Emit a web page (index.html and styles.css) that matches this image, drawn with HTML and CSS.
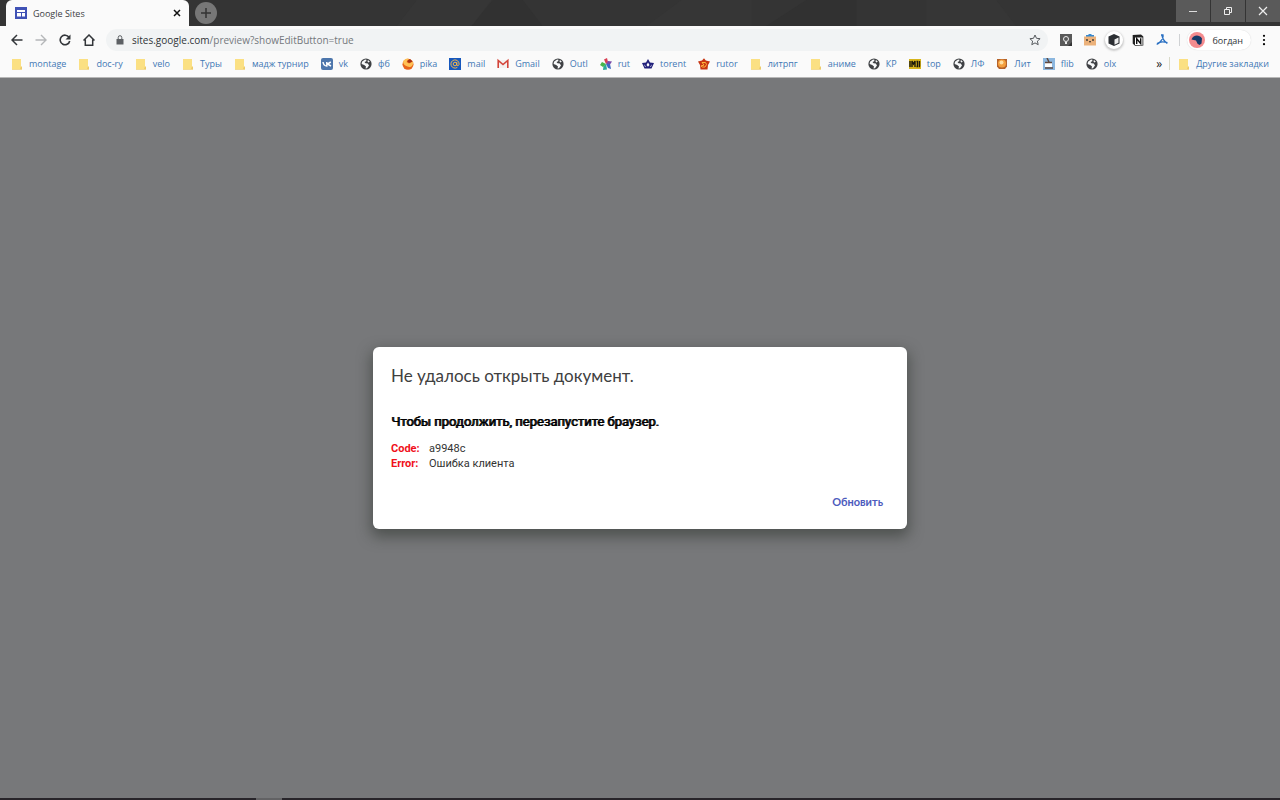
FILE: index.html
```html
<!DOCTYPE html>
<html lang="ru">
<head>
<meta charset="utf-8">
<title>Google Sites</title>
<link rel="stylesheet" href="styles.css">
</head>
<body>
<svg class="defs" aria-hidden="true">
  <symbol id="folder" viewBox="0 0 12 12"><path d="M1 1h9v8l1 1V11.500H1z" fill="#fbe083"/><path d="M10 8.500h1v3H1V11h8z" fill="#edcb6c"/></symbol>
  <symbol id="globe" viewBox="0 0 12 12"><circle cx="6" cy="6" r="5.600" fill="#3f4144"/><path d="M2 3.800 5 1.500l1.500.3-.3 1.500L4.500 4l1 1.300 2.300.2L9 7.400 7 10.200l-1.500.3.500-2-1.800-1.400L1.600 6zM8 2l1.800 1.700L8.400 4.500 7.400 3.300z" fill="#f8f9fa"/></symbol>
</svg>
<header class="browser">
  <div class="tabbar">
    <div class="tab">
      <svg class="tab-icon" viewBox="0 0 12 12"><path fill="#3f51b5" d="M0 0h12v12H0z"/><path fill="#fff" d="M2 3h8v2H2zM2 6h4v3.500H2zM7 6h3v3.500H7z"/></svg>
      <span class="tab-title">Google Sites</span>
      <button class="tab-close" aria-label="Закрыть"><svg width="8" height="8" viewBox="0 0 8 8"><path d="m1 1 6 6M7 1 1 7" stroke="#111" stroke-width="1.500"/></svg></button>
    </div>
    <button class="new-tab" aria-label="Новая вкладка"><svg width="12" height="12" viewBox="0 0 12 12"><path d="M6 1v10M1 6h10" stroke="#333" stroke-width="1.500"/></svg></button>
    <svg class="theme" viewBox="0 0 960 26" preserveAspectRatio="none"><path fill="#363636" d="M180 26 200 0h75L255 26zM430 26 465 0h70v26zM710 0h70l20 26h-90z"/><path fill="#313131" d="m255 26 21-26h30l20 26zM590 0h50v26h-90z"/></svg>
    <div class="window-buttons">
      <button aria-label="Свернуть"><svg width="10" height="10" viewBox="0 0 10 10"><path d="M1 5.500h8" stroke="#ddd"/></svg></button>
      <button aria-label="Восстановить"><svg width="10" height="10" viewBox="0 0 10 10"><path d="M1.500 3.500h5v5h-5zM3.500 3.500v-2h5v5h-2" fill="none" stroke="#eee"/></svg></button>
      <button aria-label="Закрыть окно"><svg width="10" height="10" viewBox="0 0 10 10"><path d="m1 1 8 8M9 1 1 9" stroke="#eee" stroke-width="1.200"/></svg></button>
    </div>
  </div>
  <div class="toolbar">
    <nav class="nav">
      <button aria-label="Назад"><svg viewBox="0 0 12 12"><path d="M11.500 6H1.200M6 1 1 6l5 5" fill="none" stroke="#33363a" stroke-width="1.500"/></svg></button>
      <button aria-label="Вперёд"><svg viewBox="0 0 12 12"><path d="M.5 6h10.300M6 1l5 5-5 5" fill="none" stroke="#b5b7b9" stroke-width="1.400"/></svg></button>
      <button aria-label="Обновить страницу"><svg viewBox="0 0 12 12"><path d="M10 3.300A4.800 4.800 0 1 0 10.700 7" fill="none" stroke="#33363a" stroke-width="1.600"/><path d="M11.500.5v5h-5z" fill="#33363a"/></svg></button>
      <button aria-label="Домой"><svg viewBox="0 0 12 12"><path d="M.5 6.500 6 1l5.500 5.500M2.300 5.500v5.700h7.400V5.500" fill="none" stroke="#33363a" stroke-width="1.500"/></svg></button>
    </nav>
    <div class="omnibox">
      <svg class="lock" viewBox="0 0 8 10"><path fill="#5c6064" d="M.5 4h7v5.500h-7z"/><path d="M2.200 4V2.500a1.800 1.800 0 0 1 3.600 0V4" fill="none" stroke="#5c6064"/></svg>
      <span class="url"><span class="host">sites.google.com</span>/preview?showEditButton=true</span>
      <button class="star" aria-label="Добавить в закладки"><svg viewBox="0 0 12 12"><path d="m6 1 1.500 3.300 3.600.4-2.700 2.400.8 3.600L6 8.900l-3.200 1.800.8-3.600L.9 4.700l3.600-.4z" fill="none" stroke="#55595d"/></svg></button>
    </div>
    <div class="extensions">
      <button aria-label="Keep"><svg viewBox="0 0 12 12"><path fill="#595959" d="M0 0h12v12H0z"/><circle cx="6" cy="5" r="2.500" fill="none" stroke="#eee"/><path d="M5 8h2v2H5z" fill="#eee"/><path d="M12 8v4H8z" fill="#333"/></svg></button>
      <button aria-label="Коробка"><svg viewBox="0 0 12 12"><path fill="#3789cf" d="M2 1h2l1-1h2l1 1h2v2H2z"/><path fill="#ecb27b" d="M0 2.500h12v9H0z"/><circle cx="3" cy="6" r=".9" fill="#333"/><circle cx="9" cy="6" r=".9" fill="#333"/><path d="M5 7.500 6 8l1-.5" fill="none" stroke="#222"/></svg></button>
      <button class="raised" aria-label="Куб"><svg viewBox="0 0 12 12"><path d="m6 0 5.500 2.500v7L6 12 .5 9.500v-7z" fill="#2c2f33"/><path d="m6.500 5.500 4-2v5.300l-4 2z" fill="#eee"/></svg></button>
      <button aria-label="Notion"><svg viewBox="0 0 12 12"><path d="M.7 1 9 .6 11.300 2.500v9L3 11.700.7 9.500z" fill="#222"/><path d="M3 3.500h7.500v7.500H3z" fill="#fff"/><path d="M4.700 10V4.700L8.700 9.500V4.300" fill="none" stroke="#111" stroke-width="1.400"/></svg></button>
      <button aria-label="Acrobat"><svg viewBox="0 0 12 12"><path d="M5 1h2c.5 2-.4 4-2.500 6.500C3 9.300 2 10 .7 10.300M6 1c0 3 1.500 5.500 5.300 8.500M1 9.500c3-2 6-2.200 10.500-.8" fill="none" stroke="#286fc2" stroke-width="1.300"/></svg></button>
    </div>
    <button class="profile"><svg class="avatar" viewBox="0 0 16 16"><circle cx="8" cy="8" r="8" fill="#f48b8e"/><path d="M2.500 7.500C4 3 10 2 13 6.500l-.5 5-2 1.500-2-1.200L7 8.500z" fill="#163a68"/></svg>богдан</button>
    <button class="more" aria-label="Меню"><svg viewBox="0 0 12 12"><circle cx="6" cy="1.800" r="1.100"/><circle cx="6" cy="6" r="1.100"/><circle cx="6" cy="10.200" r="1.100"/></svg></button>
  </div>
  <nav class="bookmarks">
    <a href="#"><svg><use href="#folder"/></svg>montage</a>
    <a href="#"><svg><use href="#folder"/></svg>doc-ry</a>
    <a href="#"><svg><use href="#folder"/></svg>velo</a>
    <a href="#"><svg><use href="#folder"/></svg>Туры</a>
    <a href="#"><svg><use href="#folder"/></svg>мадж турнир</a>
    <a href="#"><svg viewBox="0 0 12 12"><rect width="12" height="12" rx="2" fill="#4d76ac"/><path d="M2 4c.4 2.500 1.500 4 3.800 4V4M9.800 4 6.500 6 10 8" fill="none" stroke="#fff" stroke-width="1.500"/></svg>vk</a>
    <a href="#"><svg><use href="#globe"/></svg>фб</a>
    <a href="#"><svg viewBox="0 0 12 12"><circle cx="6" cy="6.300" r="5.500" fill="#e8641b"/><path d="M1 3.500C3 0 6 0 7 1L4.500 4 7 5.500l4-2C12 8 8 10 5.500 8.500 3 8 1 6 1 3.500z" fill="#ffc155"/><path d="m5 3 3-2 2.500 2.500L7 5z" fill="#a63212"/></svg>pika</a>
    <a href="#"><svg viewBox="0 0 12 12"><path fill="#1758bd" d="M0 0h12v12H0z"/><circle cx="6" cy="6" r="1.800" fill="none" stroke="#f5b64c"/><path d="M7.800 4v3.300c1.500 1 2.300-.3 2.300-1.300A4.100 4.100 0 1 0 8.300 9.400" fill="none" stroke="#f5b64c"/></svg>mail</a>
    <a href="#"><svg viewBox="0 0 12 12"><path fill="#f4f0ef" d="M1 2h10v8H1z"/><path d="M1.200 10V2.500L6 6.500l4.800-4V10" fill="none" stroke="#d34439" stroke-width="1.600"/></svg>Gmail</a>
    <a href="#"><svg><use href="#globe"/></svg>Outl</a>
    <a href="#"><svg viewBox="0 0 12 12"><path d="M6 6 4 1.500 7 0l1 4z" fill="#d83e53"/><path d="m6 6 2-3 4 .5-2 3z" fill="#7747a7"/><path d="m6 6 4 0 1 5-3-1z" fill="#3c68c2"/><path d="m6 6 1 5.500-4 .5.500-4z" fill="#2ca899"/><path d="M6 6 3 9 0 7l2-3z" fill="#47b549"/></svg>rut</a>
    <a href="#"><svg viewBox="0 0 12 12"><path d="m6 1 2 3.500L12 5l-2.500 5.500h-7L0 5l4-.5z" fill="#21207b"/><path d="M6 4.500 7.500 7 6 8.800 4.500 7zM2 6.200l2 2.500H3zM10 6.200 8 8.700h1z" fill="#fff"/></svg>torent</a>
    <a href="#"><svg viewBox="0 0 12 12"><path d="m6 .3 1.800 2.200L12 3.500 10 7l-.5 4.500h-7L2 7 0 3.500l4-1z" fill="#c73512"/><path d="M4 4.500h3.500l1 2L7 9H4.500L3 8l3-1z" fill="none" stroke="#ffb43c"/></svg>rutor</a>
    <a href="#"><svg><use href="#folder"/></svg>литрпг</a>
    <a href="#"><svg><use href="#folder"/></svg>аниме</a>
    <a href="#"><svg><use href="#globe"/></svg>КР</a>
    <a href="#"><svg viewBox="0 0 12 12"><path fill="#d7b51c" d="M0 1h12v10H0z"/><path d="M1 3v6M3 9V3l1.500 3L6 3v6M7.500 3.500h1V8.500h-1M10.500 3v5.500H11" fill="none" stroke="#1b190c" stroke-width="1.400"/></svg>top</a>
    <a href="#"><svg><use href="#globe"/></svg>ЛФ</a>
    <a href="#"><svg viewBox="0 0 12 12"><path d="M1 1h10v7.500L9 11H3L1 8.500z" fill="#b5632b"/><circle cx="6" cy="5.500" r="4" fill="#f5a03e"/><circle cx="5.500" cy="4.500" r="2" fill="#ffe0a3"/></svg>Лит</a>
    <a href="#"><svg viewBox="0 0 12 12"><path fill="#8cb7df" d="M0 0h12v12H0z"/><path fill="#fff" d="M2 5h7v4H2z"/><path d="M2 4.500h7M2 10h8M4 0l2 4" fill="none" stroke="#5f4a42" stroke-width="1.500"/></svg>flib</a>
    <a href="#"><svg><use href="#globe"/></svg>olx</a>
    <div class="other">
      <button class="overflow" aria-label="Ещё закладки">»</button>
      <a href="#"><svg><use href="#folder"/></svg>Другие закладки</a>
    </div>
  </nav>
</header>
<main class="page">
  <section class="dialog" role="alertdialog" aria-labelledby="title">
    <h1 id="title">Не удалось открыть документ.</h1>
    <h2>Чтобы продолжить, перезапустите браузер.</h2>
    <dl>
      <dt>Code:</dt><dd>a9948c</dd>
      <dt>Error:</dt><dd>Ошибка клиента</dd>
    </dl>
    <button class="reload">Обновить</button>
  </section>
</main>
<footer class="taskbar"></footer>
</body>
</html>
```
FILE: styles.css
```css
* { box-sizing: border-box; }
body {
  margin: 0;
  min-height: 100vh;
  display: flex;
  flex-direction: column;
  background: #77787a;
  font-family: "Open Sans", "Noto Sans", sans-serif;
  font-size: 9px;
}
button { padding: 0; border: 0; background: none; font: inherit; color: inherit; }
svg { display: block; flex: none; }
.defs { position: absolute; width: 0; height: 0; }

.tabbar { display: flex; height: 26px; padding-left: 6px; background: #343434; }
.tab {
  display: flex;
  align-items: center;
  width: 183px;
  padding: 0 8px 0 9px;
  border-radius: 6px 6px 0 0;
  background: #fafafa;
  color: #3c4043;
}
.tab-icon { width: 12px; height: 12px; }
.tab-title { flex: 1; margin-left: 6px; }
.new-tab {
  display: grid;
  place-items: center;
  width: 22px;
  height: 22px;
  margin: 2px 0 0 6px;
  border-radius: 50%;
  background: #777;
}
.theme { flex: 1; width: 0; height: 26px; }
.window-buttons { display: flex; gap: 1px; height: 22px; }
.window-buttons button { display: grid; place-items: center; width: 34px; background: #5a5a5a; }

.toolbar { display: flex; align-items: center; height: 28px; padding: 0 10px 0 11px; background: #fafafa; }
.toolbar svg { width: 12px; height: 12px; }
.nav { display: flex; gap: 12px; }
.omnibox {
  flex: 1;
  display: flex;
  align-items: center;
  height: 22px;
  margin-left: 11px;
  padding: 0 7px 0 10px;
  border-radius: 11px;
  background: #f1f3f4;
}
.toolbar .lock { width: 8px; height: 10px; }
.url { flex: 1; margin-left: 8px; font-size: 10px; color: #74787c; }
.host { color: #303337; }
.extensions { display: flex; align-items: center; gap: 12px; margin-left: 12px; padding-right: 11px; border-right: 1px solid #d0d2d4; }
.extensions button { height: 12px; }
.raised svg { border-radius: 50%; background: #fff; box-shadow: 0 0 0 3px #fff, 0 1px 2px 4px #ccc; overflow: visible; }
.profile {
  display: flex;
  align-items: center;
  gap: 7px;
  height: 20px;
  margin-left: 7px;
  padding: 0 8px 0 2px;
  border-radius: 10px;
  background: #fff;
  box-shadow: 0 0 1px #ccc;
  color: #303337;
}
.profile .avatar { width: 16px; height: 16px; }
.more { margin-left: 7px; }

.bookmarks {
  display: flex;
  align-items: center;
  gap: 12px;
  height: 24px;
  padding: 0 11px 4px;
  border-bottom: 1px solid #b7b7b7;
  background: #fafafa;
}
.bookmarks a { display: flex; align-items: center; gap: 6px; color: #3f78b5; text-decoration: none; white-space: nowrap; }
.bookmarks svg { width: 12px; height: 12px; }
.other { display: flex; align-items: center; margin-left: auto; }
.overflow { padding-right: 7px; font-size: 12px; line-height: 12px; color: #222; }
.other a { padding-left: 8px; border-left: 1px solid #d9d9c8; }

.page { flex: 1; display: grid; place-items: center; padding: 0 16px; }
.dialog {
  display: flex;
  flex-direction: column;
  width: 100%;
  max-width: 534px;
  padding: 18px;
  border-radius: 6px;
  background: #fff;
  box-shadow: 0 6px 14px 2px rgba(40, 45, 40, 0.5);
  font-family: Roboto, sans-serif;
}
h1 { margin: 0; font: 400 17px/22px Lato, sans-serif; color: #404040; }
h2 { margin: 26px 0 0; font-size: 13px; font-weight: 400; line-height: 18px; color: #000; text-shadow: 1px 0 0 #000; }
dl { display: grid; grid-template-columns: 38px 1fr; margin: 10px 0 0; font-size: 11px; line-height: 15px; }
dt { font-weight: 700; color: #f0101a; }
dd { margin: 0; color: #333; }
.reload { align-self: flex-end; margin: 22px 6px 0 0; font: 700 11px/18px Lato, sans-serif; color: #4d5bbd; }
.taskbar { height: 2px; background: linear-gradient(90deg, #28252a 20%, #626264 20%, #626264 22%, #28252a 22%); }
```
